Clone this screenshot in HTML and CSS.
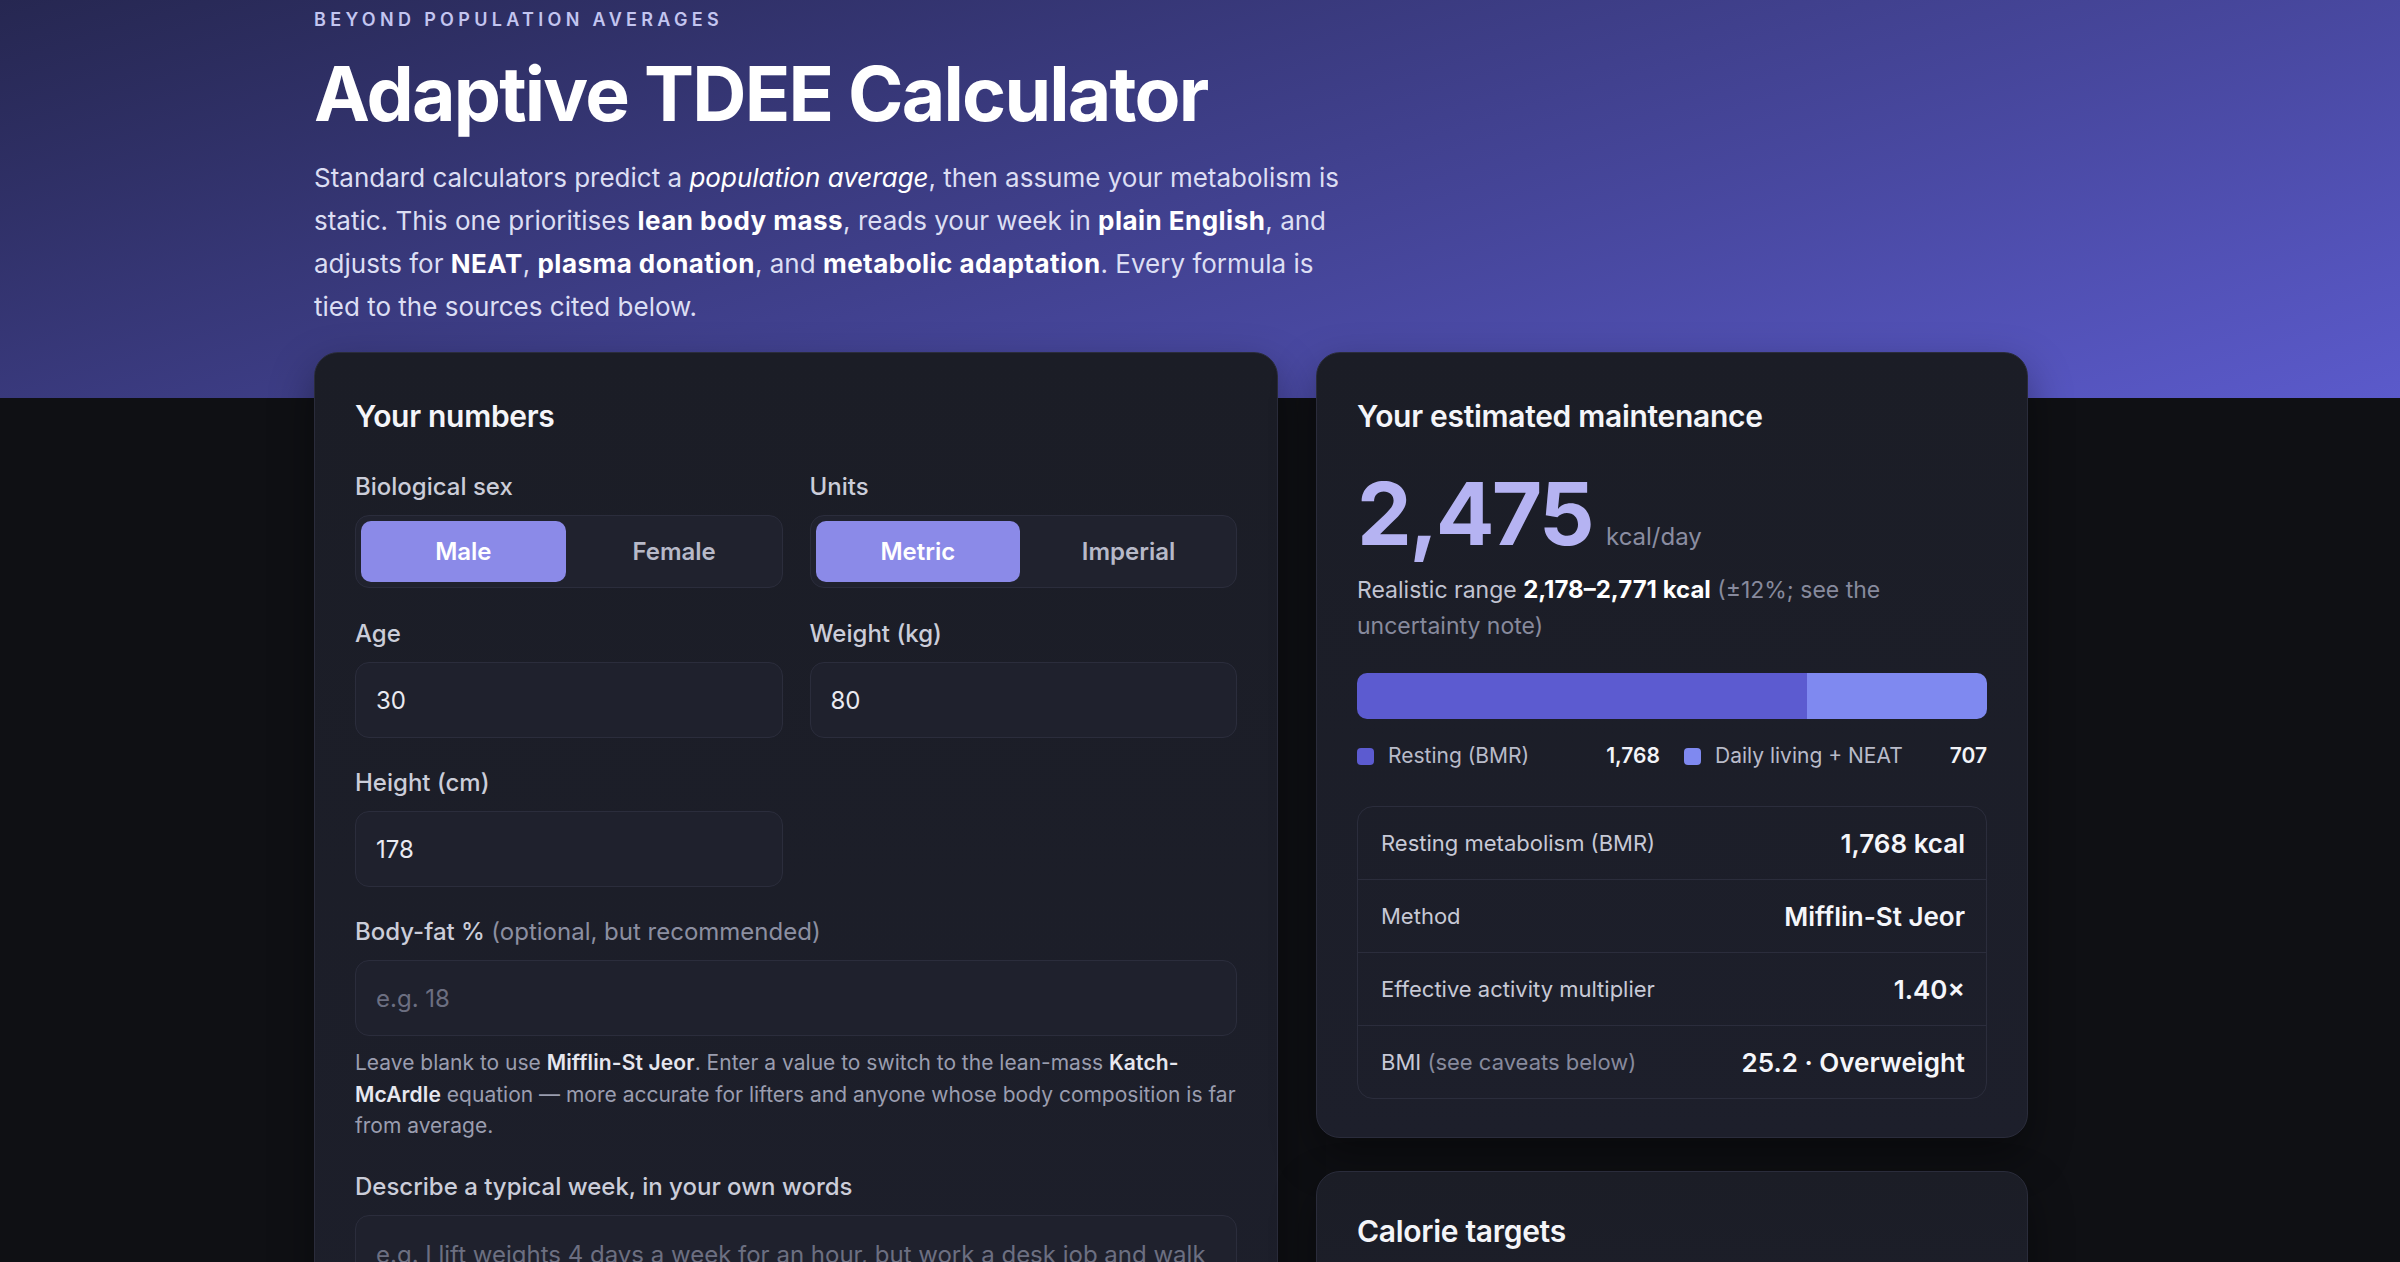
FILE: index.html
```html
<!DOCTYPE html>
<html lang="en">
<head>
<meta charset="utf-8">
<title>Adaptive TDEE Calculator</title>
<link rel="stylesheet" href="styles.css">
</head>
<body>
<header class="hero">
  <div class="wrap">
    <p class="eyebrow">Beyond population averages</p>
    <h1 class="title">Adaptive TDEE Calculator</h1>
    <p class="lede">Standard calculators predict a <em>population average</em>, then assume your metabolism is static. This one prioritises <strong>lean body mass</strong>, reads your week in <strong>plain English</strong>, and adjusts for <strong>NEAT</strong>, <strong>plasma donation</strong>, and <strong>metabolic adaptation</strong>. Every formula is tied to the sources cited below.</p>
  </div>
</header>

<main class="wrap layout">
  <section class="card inputs">
    <h2 class="card-title">Your numbers</h2>
    <div class="fields">
      <div class="field">
        <span class="label">Biological sex</span>
        <div class="segment">
          <button class="seg-btn is-active" type="button">Male</button>
          <button class="seg-btn" type="button">Female</button>
        </div>
      </div>
      <div class="field">
        <span class="label">Units</span>
        <div class="segment">
          <button class="seg-btn is-active" type="button">Metric</button>
          <button class="seg-btn" type="button">Imperial</button>
        </div>
      </div>
      <div class="field">
        <label class="label" for="age">Age</label>
        <input class="text-input" id="age" type="text" value="30">
      </div>
      <div class="field">
        <label class="label" for="weight">Weight (kg)</label>
        <input class="text-input" id="weight" type="text" value="80">
      </div>
      <div class="field">
        <label class="label" for="height">Height (cm)</label>
        <input class="text-input" id="height" type="text" value="178">
      </div>
      <div class="field field-wide">
        <label class="label" for="bf">Body-fat % <span class="label-muted">(optional, but recommended)</span></label>
        <input class="text-input" id="bf" type="text" placeholder="e.g. 18">
        <p class="help">Leave blank to use <strong>Mifflin-St Jeor</strong>. Enter a value to switch to the lean-mass <strong>Katch-McArdle</strong> equation — more accurate for lifters and anyone whose body composition is far from average.</p>
      </div>
      <div class="field field-wide">
        <label class="label" for="week">Describe a typical week, in your own words</label>
        <textarea class="text-input textarea" id="week" rows="4" placeholder="e.g. I lift weights 4 days a week for an hour, but work a desk job and walk the dog most evenings."></textarea>
      </div>
    </div>
  </section>

  <div class="side">
    <section class="card results">
      <h2 class="card-title">Your estimated maintenance</h2>
      <div class="big">
        <span class="big-num">2,475</span>
        <span class="big-unit">kcal/day</span>
      </div>
      <p class="range">Realistic range <strong>2,178–2,771 kcal</strong> <span class="muted">(±12%; see the uncertainty note)</span></p>
      <div class="bar">
        <div class="bar-seg bar-bmr" style="width: 71.4%"></div>
        <div class="bar-seg bar-neat"></div>
      </div>
      <div class="legend">
        <div class="legend-item"><span class="swatch swatch-bmr"></span><span class="legend-label">Resting (BMR)</span><span class="legend-val">1,768</span></div>
        <div class="legend-item"><span class="swatch swatch-neat"></span><span class="legend-label">Daily living + NEAT</span><span class="legend-val">707</span></div>
      </div>
      <div class="stats">
        <div class="stat-row"><span class="stat-label">Resting metabolism (BMR)</span><span class="stat-val">1,768 kcal</span></div>
        <div class="stat-row"><span class="stat-label">Method</span><span class="stat-val">Mifflin-St Jeor</span></div>
        <div class="stat-row"><span class="stat-label">Effective activity multiplier</span><span class="stat-val">1.40×</span></div>
        <div class="stat-row"><span class="stat-label">BMI <span class="muted">(see caveats below)</span></span><span class="stat-val">25.2 · Overweight</span></div>
      </div>
    </section>

    <section class="card targets">
      <h2 class="card-title">Calorie targets</h2>
    </section>
  </div>
</main>
</body>
</html>
```

FILE: styles.css
```css
* { box-sizing: border-box; }

html, body { margin: 0; padding: 0; }

body {
  font-family: Inter, "Noto Sans", "Liberation Sans", sans-serif;
  color: #e8e9f1;
  background:
    linear-gradient(163deg, #262751 0%, #5b5acb 100%) 0 0 / 100% 398px no-repeat,
    #0f1014;
  min-height: 100vh;
}

.wrap {
  max-width: 1772px;
  margin: 0 auto;
}

/* ---------- hero ---------- */
.hero {
  padding: 6px 0 24px;
}

.eyebrow {
  margin: 0;
  font-size: 18px;
  line-height: 27px;
  font-weight: 600;
  letter-spacing: 0.24em;
  text-transform: uppercase;
  color: #c3c5f0;
}

.title {
  margin: 20px 0 0;
  font-size: 75px;
  line-height: 82px;
  font-weight: 700;
  letter-spacing: -0.024em;
  color: #ffffff;
}

.lede {
  margin: 21px 0 0;
  max-width: 1032px;
  font-size: 26px;
  line-height: 43px;
  color: #dcdef3;
}

.lede strong { color: #ffffff; font-weight: 700; letter-spacing: 0.018em; }
.lede em { color: #ffffff; }

/* ---------- layout ---------- */
.layout {
  display: grid;
  grid-template-columns: 964px 712px;
  column-gap: 38px;
  align-items: start;
}

.card {
  background: linear-gradient(180deg, #1b1d26 0%, #1d1f2b 100%);
  border: 1px solid #2a2c3b;
  border-radius: 24px;
  padding: 45px 40px 38px;
  box-shadow: 0 18px 44px rgba(0, 0, 0, 0.4);
}

.card-title {
  margin: 0 0 37px;
  font-size: 30px;
  line-height: 36px;
  font-weight: 600;
  letter-spacing: -0.01em;
  color: #f4f5f9;
}

/* ---------- inputs card ---------- */
.inputs { padding-bottom: 60px; }
.inputs .card-title { margin-bottom: 38px; }

.fields {
  display: grid;
  grid-template-columns: 1fr 1fr;
  column-gap: 27px;
  row-gap: 30px;
}

.field { display: flex; flex-direction: column; min-width: 0; }
.field-wide { grid-column: 1 / -1; }

.label {
  display: block;
  margin-bottom: 14px;
  font-size: 24px;
  line-height: 29px;
  font-weight: 500;
  color: #cbcdd9;
}

.label-muted { font-weight: 400; color: #8c8fa1; }

.segment {
  display: grid;
  grid-template-columns: 1fr 1fr;
  gap: 6px;
  height: 73px;
  padding: 5px;
  background: #20222e;
  border: 1px solid #2b2d3c;
  border-radius: 14px;
  margin-bottom: 1px;
}

.seg-btn {
  font: inherit;
  font-size: 24px;
  font-weight: 600;
  color: #b7b9c8;
  background: transparent;
  border: 0;
  border-radius: 10px;
  cursor: pointer;
}

.seg-btn.is-active {
  background: #8b8ae8;
  color: #ffffff;
}

.text-input {
  display: block;
  width: 100%;
  height: 76px;
  padding: 22px 20px;
  font: inherit;
  font-size: 24px;
  line-height: 30px;
  color: #e9eaf1;
  background: #1f212d;
  border: 1px solid #2b2d3c;
  border-radius: 14px;
  outline: none;
}

.text-input::placeholder { color: #6c6f81; }

.textarea {
  height: 150px;
  resize: none;
  line-height: 36px;
  padding: 21px 20px;
}

.help {
  margin: 11px 0 0;
  font-size: 21px;
  line-height: 31.5px;
  color: #9a9daf;
}

.help strong { color: #e6e7ef; font-weight: 600; letter-spacing: 0.006em; }

/* ---------- results card ---------- */
.side { display: flex; flex-direction: column; gap: 33px; }

.big {
  display: flex;
  align-items: baseline;
  margin-top: -1px;
}

.big-num {
  font-size: 87px;
  line-height: 87px;
  font-weight: 700;
  letter-spacing: -0.03em;
  color: #b5b3f2;
}

.big-unit {
  margin-left: 14px;
  font-size: 24px;
  line-height: 29px;
  color: #8a8da1;
}

.range {
  margin: 15px 0 0;
  font-size: 23px;
  line-height: 36px;
  color: #c2c4d2;
}

.range strong { color: #ffffff; font-weight: 700; font-size: 24px; }
.muted { color: #878a9d; }

.bar {
  display: flex;
  height: 46px;
  margin-top: 29px;
  border-radius: 10px;
  overflow: hidden;
}

.bar-seg { height: 100%; }
.bar-bmr { background: #5c5bd0; }
.bar-neat { flex: 1; background: #7f89f0; }

.legend {
  display: grid;
  grid-template-columns: 1fr 1fr;
  column-gap: 24px;
  margin-top: 22px;
}

.legend-item {
  display: flex;
  align-items: center;
  font-size: 21px;
  line-height: 30px;
}

.swatch {
  width: 17px;
  height: 17px;
  border-radius: 4px;
  margin-right: 14px;
  flex: none;
}

.swatch-bmr { background: #5c5bd0; }
.swatch-neat { background: #7f89f0; }

.legend-label { color: #b9bbc9; }
.legend-val { margin-left: auto; font-weight: 600; color: #f3f4f8; }

.stats {
  margin-top: 35px;
  border: 1px solid #2b2d3c;
  border-radius: 16px;
  overflow: hidden;
}

.stat-row {
  display: flex;
  align-items: center;
  justify-content: space-between;
  height: 72px;
  padding: 0 21px 0 23px;
}

.stat-row + .stat-row {
  height: 73px;
  border-top: 1px solid #2b2d3c;
}

.stat-label {
  font-size: 22px;
  color: #c7c9d6;
}

.stat-val {
  font-size: 26px;
  font-weight: 600;
  color: #f5f6fa;
}

.targets { min-height: 200px; padding-top: 41px; }
```
